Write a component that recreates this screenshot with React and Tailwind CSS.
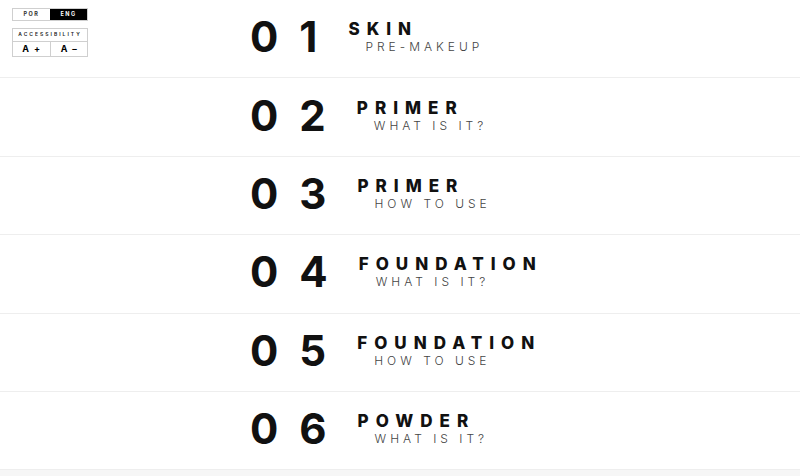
import React from 'react';

const lessons = [
  { n: '1', title: 'SKIN', sub: 'PRE-MAKEUP' },
  { n: '2', title: 'PRIMER', sub: 'WHAT IS IT?' },
  { n: '3', title: 'PRIMER', sub: 'HOW TO USE' },
  { n: '4', title: 'FOUNDATION', sub: 'WHAT IS IT?' },
  { n: '5', title: 'FOUNDATION', sub: 'HOW TO USE' },
  { n: '6', title: 'POWDER', sub: 'WHAT IS IT?' },
];

const font = { fontFamily: 'Inter, "Liberation Sans", sans-serif' };

const Widget = () => (
  <div className="absolute left-[12px] top-[8px] w-[76px] flex flex-col gap-[7px]">
    {/* language toggle */}
    <div className="flex h-[13px] border border-[#cfcfcf] text-[5.5px] font-bold tracking-[1.5px]">
      <span className="flex-1 flex items-center justify-center text-[#333]">POR</span>
      <span className="flex-1 flex items-center justify-center bg-black text-white">ENG</span>
    </div>
    {/* accessibility */}
    <div className="flex flex-col border border-[#cfcfcf]">
      <div className="h-[13px] flex items-center justify-center text-[5px] font-semibold tracking-[2px] text-[#222] border-b border-[#cfcfcf]">
        ACCESSIBILITY
      </div>
      <div className="flex h-[14px] text-[9px] font-bold text-black">
        <span className="flex-1 flex items-center justify-center gap-[5px] border-r border-[#cfcfcf]">
          A<span>+</span>
        </span>
        <span className="flex-1 flex items-center justify-center gap-[5px]">
          A<span>–</span>
        </span>
      </div>
    </div>
  </div>
);

const Row = ({ n, title, sub }) => (
  <div className="h-[78.4px] border-b border-[#eeeeee] flex items-center pl-[250px] pb-[3px]">
    <div className="flex gap-[21px] text-[42px] font-bold leading-none text-[#111]">
      <span>0</span>
      <span>{n}</span>
    </div>
    <div className="ml-[31px] flex flex-col">
      <span className="text-[17px] font-extrabold leading-[17px] tracking-[7px] text-[#111]">{title}</span>
      <span className="ml-[17px] mt-[3px] text-[12px] font-light leading-[12px] tracking-[4px] text-[#444]">
        {sub}
      </span>
    </div>
  </div>
);

export default function App() {
  return (
    <div className="relative w-[800px] h-[476px] overflow-hidden bg-white" style={font}>
      <div className="flex flex-col">
        {lessons.map((l) => (
          <Row key={l.n} {...l} />
        ))}
        <div className="h-[20px] bg-[#f6f6f6]" />
      </div>
      <Widget />
    </div>
  );
}
